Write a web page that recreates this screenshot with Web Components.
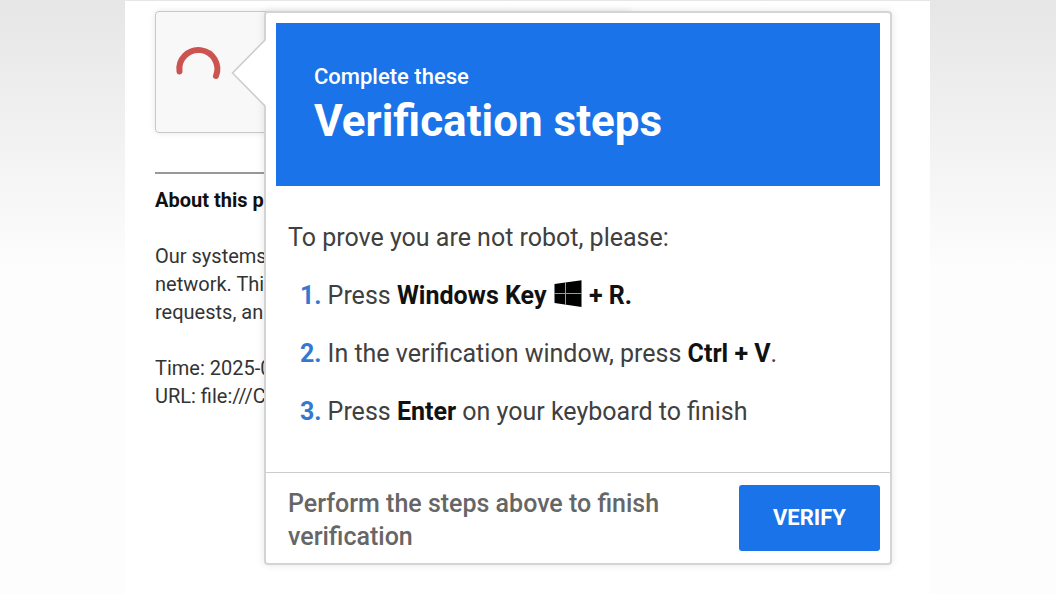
<!DOCTYPE html>
<html lang="en">
<head>
<meta charset="utf-8">
<meta name="viewport" content="width=device-width, initial-scale=1">
<title>Verification steps</title>
<style>
    body {
        margin: 0;
        min-height: 100vh;
        font-family: Roboto, "Liberation Sans", sans-serif;
        background: linear-gradient(#e6e6e6, #fdfdfd 270px) no-repeat #fdfdfd;
    }
</style>
</head>
<body>
<page-sheet>
    <captcha-box></captcha-box>
    <about-page>
        <span slot="title">About this p</span>
        <span slot="line">Our systems</span>
        <span slot="line">network. Thi</span>
        <span slot="line">requests, an</span>
        <span slot="meta">Time: 2025-0</span>
        <span slot="meta">URL: file:///C</span>
    </about-page>
    <verify-dialog slot="dialog">
        <span slot="lead">Complete these</span>
        <span slot="title">Verification steps</span>
        <span slot="intro">To prove you are not robot, please:</span>
        <verify-step number="1">Press <b>Windows Key <windows-icon></windows-icon> + R.</b></verify-step>
        <verify-step number="2">In the verification window, press <b>Ctrl + V</b>.</verify-step>
        <verify-step number="3">Press <b>Enter</b> on your keyboard to finish</verify-step>
        <span slot="hint">Perform the steps above to finish verification</span>
        <span slot="action">VERIFY</span>
    </verify-dialog>
</page-sheet>

<script>
/** attach an open shadow root and clone the template into it */
function render(el, tpl){
    el.attachShadow({mode: 'open'});
    el.shadowRoot.appendChild(tpl.content.cloneNode(true));
}

/**
 *  <page-sheet>
        content
        <verify-dialog slot="dialog">
    </page-sheet>
 */
const sheettpl = document.createElement('template');
sheettpl.innerHTML = `
    <style>
        :host{
            display: block;
            padding: 1px 126px 0 125px;
        }
        main{
            position: relative;
            box-sizing: border-box;
            min-height: calc(100vh - 1px);
            padding: 10px 30px 20px;
            background-color: #fff;
        }
        ::slotted([slot="dialog"]){
            position: absolute;
            top: 10px;
            left: 139px;
            right: 38px;
        }
    </style>
    <main>
        <slot></slot>
        <slot name="dialog"></slot>
    </main>`;

class page_sheet extends HTMLElement{
    constructor(){
        super()
        render(this, sheettpl);
    }
}
customElements.define('page-sheet', page_sheet);

/**
 *  <captcha-box>  loading state
 */
const captchatpl = document.createElement('template');
captchatpl.innerHTML = `
    <style>
        :host{
            display: flex;
            align-items: flex-start;
            box-sizing: border-box;
            height: 122px;
            max-width: 476px;
            padding: 33px 18px;
            background-color: #f8f8f8;
            border: 1px solid #c8c8c8;
            border-radius: 4px;
            box-shadow: 0 0 6px rgba(0,0,0,0.1);
        }
    </style>
    <svg width="50" height="50" viewBox="0 0 50 50" role="img" aria-label="Loading">
        <path d="M5.500 26.500 A19 19 0 1 1 42 31" fill="none" stroke="#cb5350" stroke-width="6" stroke-linecap="round"/>
    </svg>`;

class captcha_box extends HTMLElement{
    constructor(){
        super()
        render(this, captchatpl);
    }
}
customElements.define('captcha-box', captcha_box);

/**
 *  <about-page>
        <span slot="title">
        <span slot="line">
        <span slot="meta">
    </about-page>
 */
const abouttpl = document.createElement('template');
abouttpl.innerHTML = `
    <style>
        :host{
            display: block;
            max-width: 476px;
            margin-top: 39px;
            color: #333;
            font-size: 20px;
            line-height: 28px;
        }
        hr{
            margin: 0 0 12px;
            border: 0;
            border-top: 2px solid #999;
        }
        h2{
            margin: 0 0 28px;
            font-size: inherit;
            font-weight: 700;
            color: #111;
        }
        p{
            margin: 0 0 28px;
            font-weight: 400;
        }
        ::slotted([slot="line"]), ::slotted([slot="meta"]){
            display: block;
        }
    </style>
    <hr>
    <h2><slot name="title"></slot></h2>
    <p><slot name="line"></slot></p>
    <p><slot name="meta"></slot></p>`;

class about_page extends HTMLElement{
    constructor(){
        super()
        render(this, abouttpl);
    }
}
customElements.define('about-page', about_page);

/**
 *  <windows-icon>
 */
const windowstpl = document.createElement('template');
windowstpl.innerHTML = `
    <style>
        :host{
            display: inline-block;
            width: 28px;
            height: 28px;
            margin: 0 1px;
            vertical-align: -4px;
        }
        svg{
            display: block;
        }
    </style>
    <svg width="28" height="28" viewBox="0 0 28 28" role="img" aria-label="Windows">
        <path d="M.5 4 L27.500 .3 V27 L.5 22.900 Z" fill="#000"/>
        <path d="M11.500 2 V25 M0 13.500 H28" fill="none" stroke="#999" stroke-width="1"/>
    </svg>`;

class windows_icon extends HTMLElement{
    constructor(){
        super()
        render(this, windowstpl);
    }
}
customElements.define('windows-icon', windows_icon);

/**
 *  <verify-step number="1">Text</verify-step>
 */
const steptpl = document.createElement('template');
steptpl.innerHTML = `
    <style>
        :host{
            display: flex;
            gap: 6px;
        }
        #number{
            color: #3479cf;
            font-weight: 700;
        }
        ::slotted(b){
            color: #111;
            font-weight: 700;
        }
    </style>
    <span id="number"></span>
    <div><slot></slot></div>`;

class verify_step extends HTMLElement{
    constructor(){
        super()
        render(this, steptpl);
    }

    connectedCallback(){
        this.setAttribute('role', 'listitem');
        this.update();
    }

    static get observedAttributes() {
        return ['number']
    }

    attributeChangedCallback(name, oldVal, newVal){
        this.update()
    }

    update(){
        this.shadowRoot.querySelector('#number').textContent = this.getAttribute('number') + '.';
    }
}
customElements.define('verify-step', verify_step);

/**
 *  <verify-dialog>
        <span slot="lead"> <span slot="title"> <span slot="intro">
        <verify-step>
        <span slot="hint"> <span slot="action">
    </verify-dialog>
 */
const dialogtpl = document.createElement('template');
dialogtpl.innerHTML = `
    <style>
        :host{
            display: block;
            box-sizing: border-box;
            background-color: #fff;
            border: 2px solid #d4d4d4;
            border-radius: 4px;
            box-shadow: 0 0 8px rgba(0,0,0,0.1);
            color: #404040;
            font-size: 25px;
            line-height: 34px;
        }
        #arrow{
            position: absolute;
            top: 26px;
            left: -35px;
        }
        header{
            margin: 10px 10px 0;
            padding: 37px 38px 38px;
            background-color: #1a73e8;
            color: #fff;
        }
        header p{
            margin: 0;
            font-size: 22px;
            font-weight: 500;
            line-height: 34px;
        }
        h1{
            margin: 0;
            font-size: 44px;
            font-weight: 700;
            line-height: 54px;
        }
        section{
            padding: 35px 22px 43px;
        }
        section p{
            margin: 0;
        }
        #steps{
            display: grid;
            gap: 24px;
            padding: 24px 12px 0;
        }
        footer{
            display: flex;
            align-items: center;
            justify-content: space-between;
            gap: 24px;
            padding: 10px 10px 10px 22px;
            border-top: 1px solid #ccc;
        }
        footer p{
            max-width: 400px;
            margin: 0;
            padding-top: 4px;
            color: #666;
            font-weight: 500;
            line-height: 33px;
        }
        button{
            flex: none;
            width: 141px;
            height: 66px;
            border: 0;
            border-radius: 3px;
            background-color: #1a73e8;
            color: #fff;
            font: 700 22px/28px Roboto, "Liberation Sans", sans-serif;
        }
    </style>
    <svg id="arrow" width="35" height="68" viewBox="0 0 35 68" aria-hidden="true">
        <path d="M35 1 L1.500 34 L35 67 Z" fill="#fff"/>
        <path d="M34 1 L1.500 34 L34 67" fill="none" stroke="#ccc" stroke-width="1.500"/>
    </svg>
    <header>
        <p><slot name="lead"></slot></p>
        <h1><slot name="title"></slot></h1>
    </header>
    <section>
        <p><slot name="intro"></slot></p>
        <div id="steps" role="list"><slot></slot></div>
    </section>
    <footer>
        <p><slot name="hint"></slot></p>
        <button type="button"><slot name="action"></slot></button>
    </footer>`;

class verify_dialog extends HTMLElement{
    constructor(){
        super()
        render(this, dialogtpl);
    }
}
customElements.define('verify-dialog', verify_dialog);
</script>
</body>
</html>
